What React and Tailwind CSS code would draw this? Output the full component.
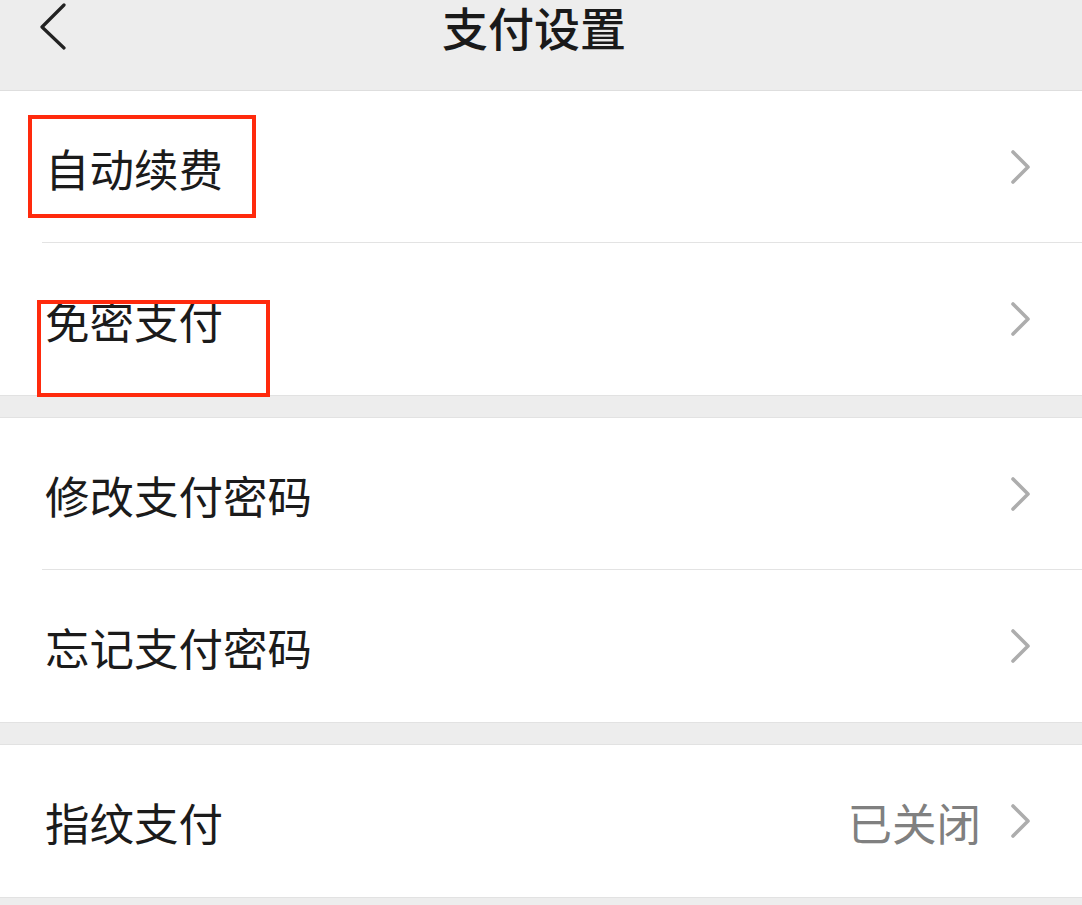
import React from "react";

const Chevron = () => (
  <svg width="22" height="34" viewBox="0 0 22 34" className="shrink-0">
    <path d="M3 2 L18 17 L3 32" fill="none" stroke="#adadad" strokeWidth="3.6" strokeLinecap="round" strokeLinejoin="round" />
  </svg>
);

const Row = ({ label, value, divider }) => (
  <div className="relative h-[152px] flex items-center pl-[45px] pr-[50px] bg-white">
    <span className="flex-1 text-[44.5px] leading-none text-[#1b1b1b] pt-[3px]">{label}</span>
    {value && <span className="text-[44.5px] leading-none text-[#808080] mr-[29px] pt-[3px]">{value}</span>}
    <Chevron />
    {divider && <div className="absolute left-[42px] right-0 bottom-0 h-px bg-[#e3e3e3]" />}
  </div>
);

const Gap = () => <div className="h-[23px] bg-[#ededed] border-y border-[#e2e2e2]" />;

export default function App() {
  return (
    <div
      className="relative w-[1082px] h-[905px] overflow-hidden bg-[#ededed]"
      style={{ fontFamily: '"Noto Sans CJK SC", "Noto Sans", sans-serif' }}
    >
      <div className="relative h-[91px] bg-[#ededed] border-b border-[#dedede]">
        <svg width="30" height="48" viewBox="0 0 30 48" className="absolute left-[38px] top-[2px]">
          <path d="M26 3 L4 25 L26 46" fill="none" stroke="#222" strokeWidth="3.2" strokeLinecap="round" strokeLinejoin="round" />
        </svg>
        <div className="flex justify-center pr-[14px]">
          <span className="text-[46px] leading-[52px] font-medium text-[#1a1a1a]">支付设置</span>
        </div>
      </div>
      <Row label="自动续费" divider />
      <Row label="免密支付" />
      <Gap />
      <Row label="修改支付密码" divider />
      <Row label="忘记支付密码" />
      <Gap />
      <Row label="指纹支付" value="已关闭" />
      <div className="border-t border-[#e2e2e2]" />

      <div className="absolute left-[28px] top-[115px] w-[228px] h-[103px] border-[4px] border-[#ff2a0d]" />
      <div className="absolute left-[37px] top-[300px] w-[233px] h-[97px] border-[4px] border-[#ff2a0d]" />
    </div>
  );
}
